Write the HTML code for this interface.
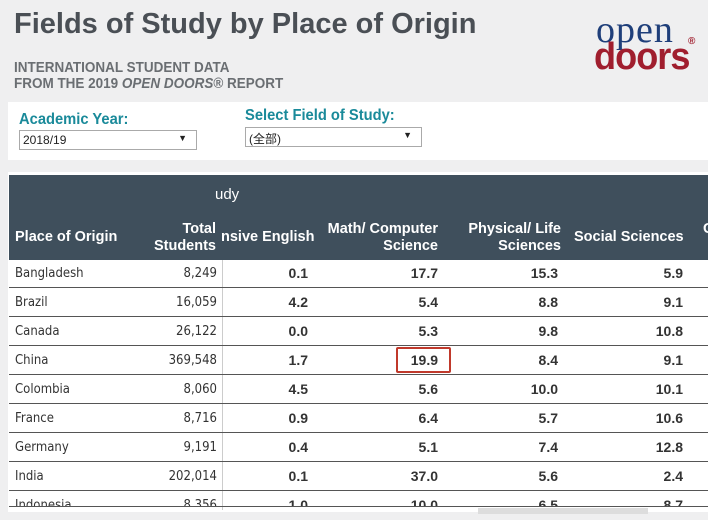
<!DOCTYPE html>
<html><head><meta charset="utf-8"><style>
*{margin:0;padding:0;box-sizing:border-box}
body{width:708px;height:520px;background:#efeff0;position:relative;overflow:hidden;font-family:"Liberation Sans",sans-serif}
.a{position:absolute;white-space:nowrap}
h1{position:absolute;left:14px;top:8px;font-size:29px;font-weight:bold;color:#4a4f55;letter-spacing:0px}
.sub{left:14px;font-size:14.5px;color:#6a6e72;line-height:18px;font-weight:bold;transform:scaleX(.93);transform-origin:left}
.panel{position:absolute;left:8px;top:102px;width:700px;height:58px;background:#fff}
.lbl{font-size:16px;color:#1a8a9a;font-weight:bold;transform:scaleX(.92);transform-origin:left}
.sel{position:absolute;border:1px solid #aaa;background:#fff;font-size:12px;color:#222;padding:2px 3px;height:20px}
.sel span{position:absolute;right:9px;top:2px;font-size:9px}
.tbl{position:absolute;left:8px;top:172px;width:700px;height:340px;background:#fff}
.hdr{position:absolute;left:9px;top:175px;width:699px;height:85px;background:#3f4f5c}
.h{color:#fff;font-weight:bold;font-size:14.5px;line-height:17px}
.r{text-align:right}
.row{position:absolute;left:9px;width:699px;height:29px;border-bottom:1px solid #555}
.c{position:absolute;top:7px;font-size:13px;color:#333;font-family:"DejaVu Sans",sans-serif;transform:scaleX(.9);transform-origin:left}
.n{position:absolute;top:6px;font-size:14px;font-weight:bold;color:#333;text-align:right}
</style></head><body>
<h1>Fields of Study by Place of Origin</h1>
<div class="a sub" style="top:59px">INTERNATIONAL STUDENT DATA</div>
<div class="a sub" style="top:75px">FROM THE 2019 <i>OPEN DOORS</i>® REPORT</div>
<div class="a" style="left:596px;top:8px;font-family:'Liberation Serif',serif;font-size:38px;color:#1f3f7a;letter-spacing:1px">open</div>
<div class="a" style="left:688px;top:36px;font-size:10px;color:#a01e2e;font-weight:bold">®</div>
<div class="a" style="left:594px;top:36px;font-size:38px;font-weight:bold;color:#a01e2e;letter-spacing:-1px;transform:scaleX(.95);transform-origin:left">doors</div>
<div class="panel"></div>
<div class="a lbl" style="left:19px;top:111px">Academic Year:</div>
<div class="sel" style="left:19px;top:130px;width:178px">2018/19<span>▼</span></div>
<div class="a lbl" style="left:245px;top:107px">Select Field of Study:</div>
<div class="sel" style="left:245px;top:127px;width:177px;font-family:'Liberation Sans','Noto Sans CJK SC',sans-serif">(全部)<span>▼</span></div>
<div class="tbl"></div>
<div class="hdr"></div>
<div class="a" style="left:215px;top:186px;color:#fff;font-size:15px">udy</div>
<div class="a h" style="left:15px;top:229px">Place of Origin</div>
<div class="a h r" style="left:140px;top:221px;width:76px">Total<br>Students</div>
<div class="a h" style="left:221px;top:229px">nsive English</div>
<div class="a h r" style="left:320px;top:221px;width:118px">Math/ Computer<br>Science</div>
<div class="a h r" style="left:450px;top:221px;width:111px">Physical/ Life<br>Sciences</div>
<div class="a h" style="left:574px;top:229px">Social Sciences</div>
<div class="a h" style="left:703px;top:221px">C</div>
<div style="position:absolute;left:222px;top:260px;width:1px;height:250px;background:#ccc"></div>
<div class="row" style="top:259px"><div class="c" style="left:6px">Bangladesh</div><div class="c r" style="left:150px;width:58px;transform-origin:right">8,249</div><div class="n" style="left:250px;width:49px">0.1</div><div class="n" style="left:380px;width:49px">17.7</div><div class="n" style="left:500px;width:49px">15.3</div><div class="n" style="left:625px;width:49px">5.9</div></div>
<div class="row" style="top:288px"><div class="c" style="left:6px">Brazil</div><div class="c r" style="left:150px;width:58px;transform-origin:right">16,059</div><div class="n" style="left:250px;width:49px">4.2</div><div class="n" style="left:380px;width:49px">5.4</div><div class="n" style="left:500px;width:49px">8.8</div><div class="n" style="left:625px;width:49px">9.1</div></div>
<div class="row" style="top:317px"><div class="c" style="left:6px">Canada</div><div class="c r" style="left:150px;width:58px;transform-origin:right">26,122</div><div class="n" style="left:250px;width:49px">0.0</div><div class="n" style="left:380px;width:49px">5.3</div><div class="n" style="left:500px;width:49px">9.8</div><div class="n" style="left:625px;width:49px">10.8</div></div>
<div class="row" style="top:346px"><div class="c" style="left:6px">China</div><div class="c r" style="left:150px;width:58px;transform-origin:right">369,548</div><div class="n" style="left:250px;width:49px">1.7</div><div class="n" style="left:380px;width:49px">19.9</div><div class="n" style="left:500px;width:49px">8.4</div><div class="n" style="left:625px;width:49px">9.1</div></div>
<div class="row" style="top:375px"><div class="c" style="left:6px">Colombia</div><div class="c r" style="left:150px;width:58px;transform-origin:right">8,060</div><div class="n" style="left:250px;width:49px">4.5</div><div class="n" style="left:380px;width:49px">5.6</div><div class="n" style="left:500px;width:49px">10.0</div><div class="n" style="left:625px;width:49px">10.1</div></div>
<div class="row" style="top:404px"><div class="c" style="left:6px">France</div><div class="c r" style="left:150px;width:58px;transform-origin:right">8,716</div><div class="n" style="left:250px;width:49px">0.9</div><div class="n" style="left:380px;width:49px">6.4</div><div class="n" style="left:500px;width:49px">5.7</div><div class="n" style="left:625px;width:49px">10.6</div></div>
<div class="row" style="top:433px"><div class="c" style="left:6px">Germany</div><div class="c r" style="left:150px;width:58px;transform-origin:right">9,191</div><div class="n" style="left:250px;width:49px">0.4</div><div class="n" style="left:380px;width:49px">5.1</div><div class="n" style="left:500px;width:49px">7.4</div><div class="n" style="left:625px;width:49px">12.8</div></div>
<div class="row" style="top:462px"><div class="c" style="left:6px">India</div><div class="c r" style="left:150px;width:58px;transform-origin:right">202,014</div><div class="n" style="left:250px;width:49px">0.1</div><div class="n" style="left:380px;width:49px">37.0</div><div class="n" style="left:500px;width:49px">5.6</div><div class="n" style="left:625px;width:49px">2.4</div></div>
<div class="row" style="top:491px;height:16px;overflow:hidden"><div class="c" style="left:6px">Indonesia</div><div class="c r" style="left:150px;width:58px;transform-origin:right">8,356</div><div class="n" style="left:250px;width:49px">1.0</div><div class="n" style="left:380px;width:49px">10.0</div><div class="n" style="left:500px;width:49px">6.5</div><div class="n" style="left:625px;width:49px">8.7</div></div>
<div style="position:absolute;left:478px;top:508px;width:170px;height:6px;background:#ddd"></div>
<div style="position:absolute;left:396px;top:347px;width:55px;height:26px;border:2px solid #c0392b;border-radius:2px"></div>
</body></html>
